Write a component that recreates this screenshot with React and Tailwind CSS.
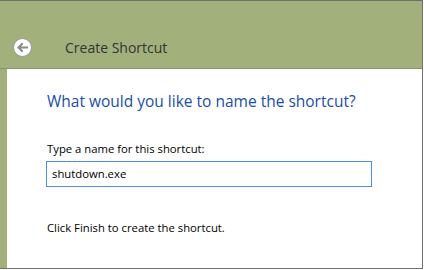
export default function App() {
  return (
    <div className="w-[424px] h-[270px] bg-white relative overflow-hidden" style={{ fontFamily: '"Open Sans", "Noto Sans", sans-serif' }}>
      <div className="w-[423px] h-[269px] flex flex-col border-t border-r border-b border-[#6f6f6f] bg-[#a2b17c]">
        <div className="h-[68px] flex items-end pb-[11px] border-b border-[#87966a]">
          <div className="ml-[13px] w-[19px] h-[19px] rounded-full bg-white border border-[#9a9a9a] flex items-center justify-center">
            <svg width="13" height="13" viewBox="0 0 13 13">
              <path d="M11 6.5H2.5M6 3L2.5 6.5L6 10" fill="none" stroke="#8a8a8a" strokeWidth="2" strokeLinecap="square" />
            </svg>
          </div>
          <span className="ml-[33px] text-[14px] leading-[19px] text-[#333]">Create Shortcut</span>
        </div>
        <div className="flex-1 ml-[7px] bg-white pl-[40px] pt-[22px]">
          <div className="text-[15.5px] leading-[20px] text-[#1a4ea7]">What would you like to name the shortcut?</div>
          <div className="mt-[30px] text-[11.3px] leading-[16px] text-black">Type a name for this shortcut:</div>
          <div className="mt-[4px] -ml-px w-[326px] h-[26px] border border-[#4a90e2] flex items-center pl-[5px] text-[11.3px] text-black">shutdown.exe</div>
          <div className="mt-[33px] text-[11.3px] leading-[16px] text-black">Click Finish to create the shortcut.</div>
        </div>
      </div>
    </div>
  )
}
